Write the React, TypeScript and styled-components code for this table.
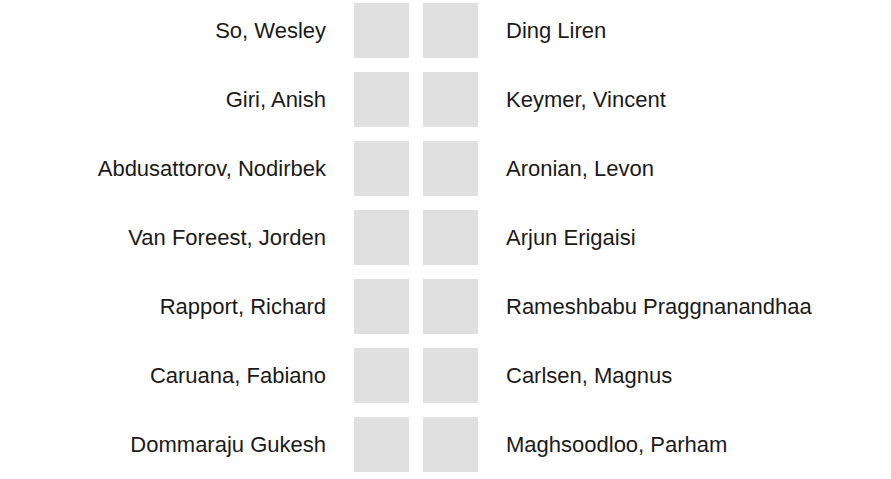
import React from 'react'
import styled, { createGlobalStyle } from 'styled-components';

const GlobalStyle = createGlobalStyle`
  body {
    margin: 0;
    background: #fff;
    font-family: "Liberation Sans", Arial, sans-serif;
  }
`

const Pairings = styled.div`
  display: grid;
  grid-template-columns: 354px 55px 69px auto;
  grid-auto-rows: 55px;
  row-gap: 14px;
  padding-top: 3px;
  align-items: center;
`;

const Player = styled.div<{ side: 'white' | 'black' }>`
  font-size: 22px;
  color: #1a1a1a;
  white-space: nowrap;
  text-align: ${p => (p.side === 'white' ? 'right' : 'left')};
  margin-right: ${p => (p.side === 'white' ? '28px' : '0')};
  margin-left: ${p => (p.side === 'black' ? '28px' : '0')};
`;

const ResultBox = styled.div<{ second?: boolean }>`
  width: 55px;
  height: 55px;
  background: #e0e0e0;
  margin-left: ${p => (p.second ? '14px' : '0')};
`;

const games = [
  ['So, Wesley', 'Ding Liren'],
  ['Giri, Anish', 'Keymer, Vincent'],
  ['Abdusattorov, Nodirbek', 'Aronian, Levon'],
  ['Van Foreest, Jorden', 'Arjun Erigaisi'],
  ['Rapport, Richard', 'Rameshbabu Praggnanandhaa'],
  ['Caruana, Fabiano', 'Carlsen, Magnus'],
  ['Dommaraju Gukesh', 'Maghsoodloo, Parham'],
]

export default function App() {
  return (
    <>
      <GlobalStyle />
      <Pairings>
        {games.map(([white, black]) => (
          <React.Fragment key={white}>
            <Player side="white">{white}</Player>
            <ResultBox />
            <ResultBox second />
            <Player side="black">{black}</Player>
          </React.Fragment>
        ))}
      </Pairings>
    </>
  )
}
